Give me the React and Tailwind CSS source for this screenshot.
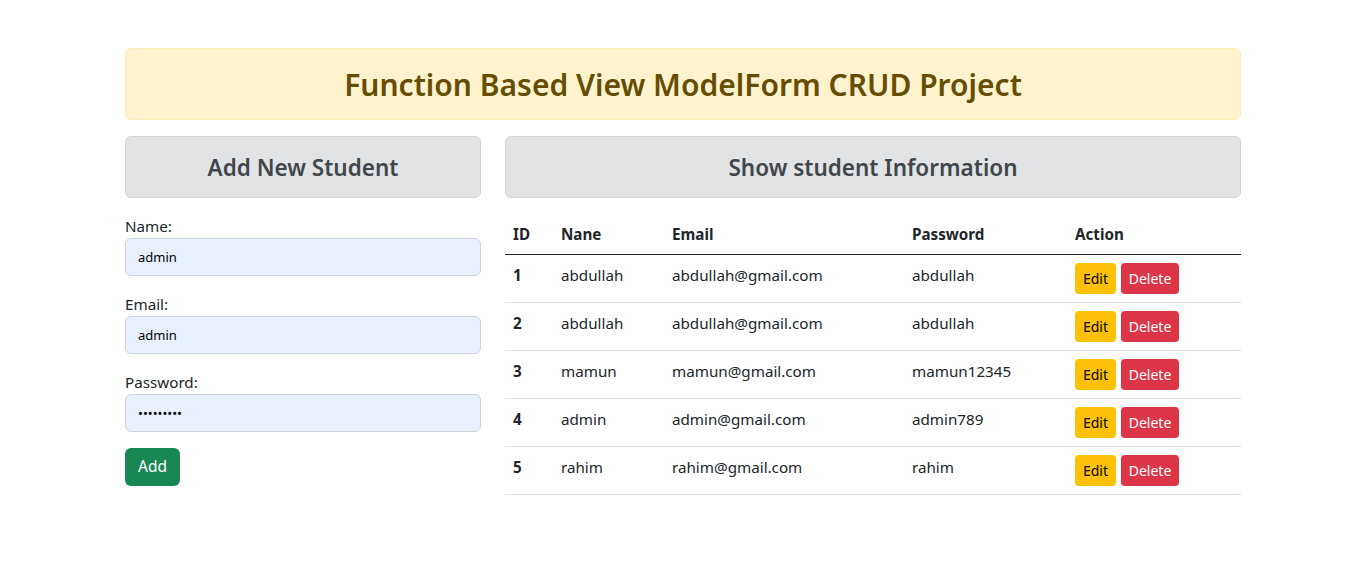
const students = [
  { id: 1, name: 'abdullah', email: 'abdullah@gmail.com', password: 'abdullah' },
  { id: 2, name: 'abdullah', email: 'abdullah@gmail.com', password: 'abdullah' },
  { id: 3, name: 'mamun', email: 'mamun@gmail.com', password: 'mamun12345' },
  { id: 4, name: 'admin', email: 'admin@gmail.com', password: 'admin789' },
  { id: 5, name: 'rahim', email: 'rahim@gmail.com', password: 'rahim' },
];

function Field({ label, type = 'text', value }) {
  return (
    <div className="mb-4">
      <label className="block text-[15.2px] leading-6">{label}</label>
      <input
        type={type}
        readOnly
        defaultValue={value}
        className="block h-[38px] w-full rounded-md border border-[#ced4da] bg-[#e8f0fe] px-3 text-[13px] text-black outline-none"
      />
    </div>
  );
}

export default function App() {
  return (
    <div className="min-h-screen bg-white font-['Noto_Sans',sans-serif] text-base text-[#212529]">
      <div className="mx-auto w-[1116px] pt-12">
        <div className="mb-4 rounded-md border border-[#ffecb5] bg-[#fff3cd] px-4 pt-[17px] pb-[15px] text-center">
          <h2 className="text-[30px] font-semibold leading-[38px] text-[#664d03]">
            Function Based View ModelForm CRUD Project
          </h2>
        </div>

        <div className="flex gap-6">
          <div className="w-[356px]">
            <div className="mb-4 rounded-md border border-[#d3d6d8] bg-[#e2e3e5] px-4 pt-[17px] pb-[15px] text-center">
              <h4 className="text-[22.5px] font-semibold leading-7 text-[#41464b]">Add New Student</h4>
            </div>
            <form>
              <Field label="Name:" value="admin" />
              <Field label="Email:" value="admin" />
              <Field label="Password:" type="password" value="admin1234" />
              <button
                type="button"
                className="h-[38px] w-[55px] rounded-md bg-[#198754] text-[15.5px] text-white"
              >
                Add
              </button>
            </form>
          </div>

          <div className="w-[736px]">
            <div className="mb-4 rounded-md border border-[#d3d6d8] bg-[#e2e3e5] px-4 pt-[17px] pb-[15px] text-center">
              <h4 className="text-[22.5px] font-semibold leading-7 text-[#41464b]">Show student Information</h4>
            </div>
            <table className="w-full table-fixed border-collapse text-left text-[15.2px]">
              <colgroup>
                <col className="w-[48px]" />
                <col className="w-[111px]" />
                <col className="w-[240px]" />
                <col className="w-[163px]" />
                <col />
              </colgroup>
              <thead>
                <tr className="border-b border-[#212529]">
                  <th className="p-2 font-bold leading-6">ID</th>
                  <th className="p-2 font-bold leading-6">Nane</th>
                  <th className="p-2 font-bold leading-6">Email</th>
                  <th className="p-2 font-bold leading-6">Password</th>
                  <th className="p-2 font-bold leading-6">Action</th>
                </tr>
              </thead>
              <tbody>
                {students.map((s) => (
                  <tr key={s.id} className="border-b border-[#dee2e6] align-top">
                    <th className="p-2 font-bold leading-6">{s.id}</th>
                    <td className="p-2 leading-6">{s.name}</td>
                    <td className="p-2 leading-6">{s.email}</td>
                    <td className="p-2 leading-6">{s.password}</td>
                    <td className="p-2">
                      <div className="flex gap-[5px]">
                        <button className="h-[31px] w-[41px] rounded bg-[#ffc107] text-sm text-black">Edit</button>
                        <button className="h-[31px] w-[58px] rounded bg-[#dc3545] text-sm text-white">Delete</button>
                      </div>
                    </td>
                  </tr>
                ))}
              </tbody>
            </table>
          </div>
        </div>
      </div>
    </div>
  );
}
